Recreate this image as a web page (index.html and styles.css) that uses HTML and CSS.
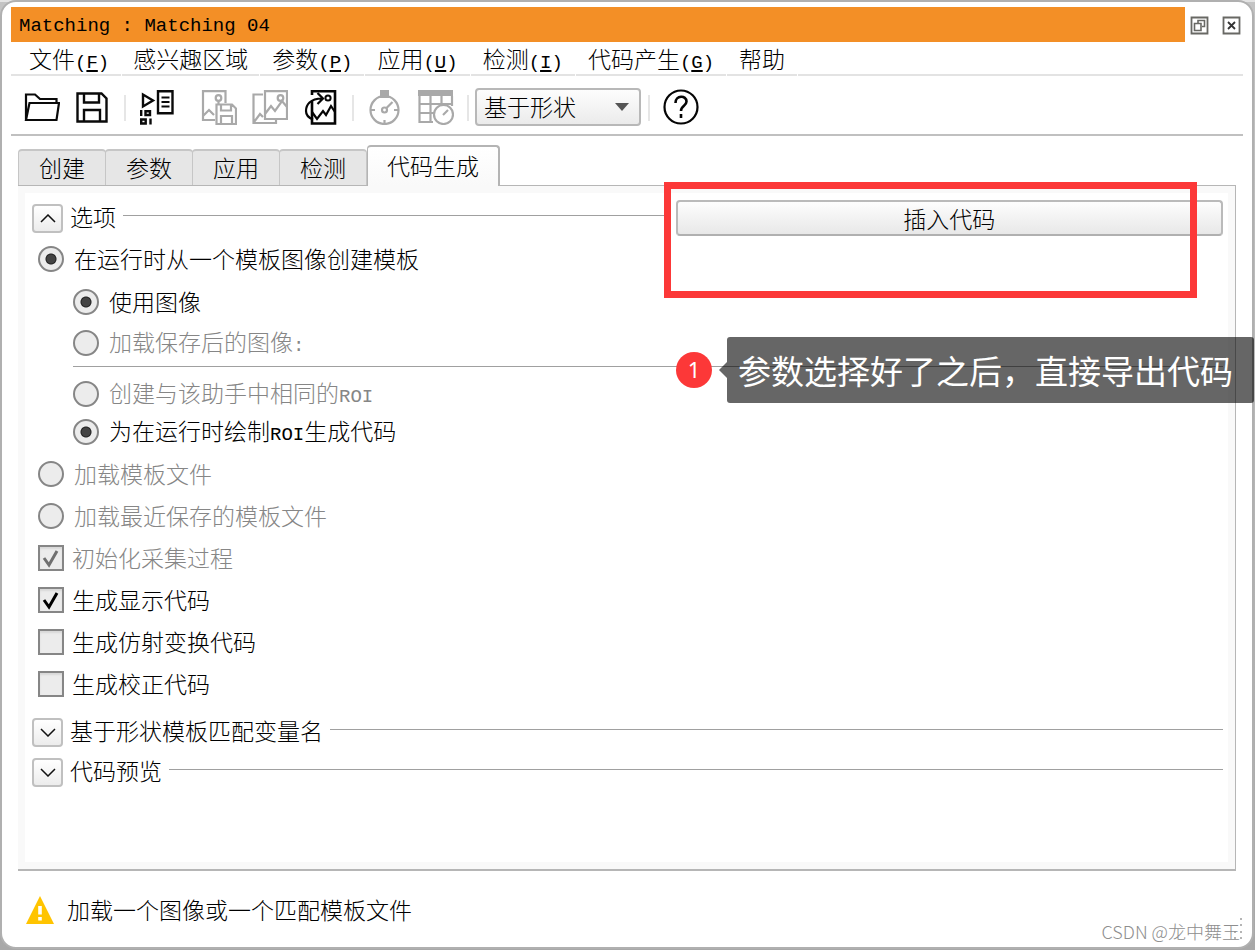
FILE: index.html
```html
<!DOCTYPE html>
<html lang="zh-CN">
<head>
<meta charset="utf-8">
<title>Matching : Matching 04</title>
<link rel="stylesheet" href="styles.css">
</head>
<body>
<div class="window">
  <header class="titlebar">
    <h1 class="title">Matching : Matching 04</h1>
    <button class="winbtn" aria-label="还原"><svg width="19" height="19" viewBox="0 0 19 19" fill="none" stroke="#686864"><path d="M1.500 1.500h16v16h-16z" stroke-width="1.800"/><path d="M8 7V4.500h6.500v6H12M4.500 7.500h6.500v7H4.500z" stroke-width="1.600"/></svg></button>
    <button class="winbtn" aria-label="关闭"><svg width="19" height="19" viewBox="0 0 19 19" fill="none" stroke="#686864"><path d="M1.500 1.500h16v16h-16z" stroke-width="1.800"/><path d="M6 6l7 7M13 6l-7 7" stroke="#333" stroke-width="1.800"/></svg></button>
  </header>

  <nav class="menubar">
    <button class="menu">文件<span class="lat">(<u>F</u>)</span></button>
    <button class="menu">感兴趣区域</button>
    <button class="menu">参数<span class="lat">(<u>P</u>)</span></button>
    <button class="menu">应用<span class="lat">(<u>U</u>)</span></button>
    <button class="menu">检测<span class="lat">(<u>I</u>)</span></button>
    <button class="menu">代码产生<span class="lat">(<u>G</u>)</span></button>
    <button class="menu">帮助</button>
    <span class="menu-rest"></span>
  </nav>

  <div class="toolbar">
    <div class="group">
      <button class="tool" aria-label="打开"><svg viewBox="0 0 36 36" fill="none" stroke="#0a0a0a" stroke-width="2.200"><path d="M2 31V5.500h9l5 4.500h16.500v4M2 31L5.500 14H35l-2.500 17z"/></svg></button>
      <button class="tool" aria-label="保存"><svg viewBox="0 0 36 36" fill="none" stroke="#0a0a0a" stroke-width="2.400"><path d="M2.500 4.500h24l5 5v23h-29zM9 4.500v9h15v-9M9 32.500V21h16v11.500"/></svg></button>
    </div>
    <span class="sep"></span>
    <div class="group">
      <button class="tool" aria-label="插入代码"><svg viewBox="0 0 36 36" fill="none" stroke="#0a0a0a" stroke-width="2.400"><path d="M4 5.500v12l10-6zM19 2.200h14.500v22H19z"/><path d="M22.500 8.500h8M22.500 13h8M22.500 17.500h8" stroke-width="2"/><path d="M2.200 21v6M11.500 29.500v6" stroke-width="2.400"/><path d="M6.500 22.200h4.500v3.800H6.500zM2.200 30.500h4.500v4H2.200z"/></svg></button>
    </div>
    <div class="group group-image">
      <button class="tool" disabled aria-label="保存图像"><svg viewBox="0 0 36 36" fill="none" stroke="#a9a9a9" stroke-width="2.200"><path d="M14 31H2V2.200h22.500V14M2 27l6-6 5 5"/><circle cx="17.500" cy="9" r="2.800"/><path d="M17.500 12v4M15.500 15.500H31l4 4V35H15.500zM20 16v5.500h10V16M20 35v-8h11v8"/></svg></button>
      <button class="tool" disabled aria-label="载入图像"><svg viewBox="0 0 36 36" fill="none" stroke="#a9a9a9" stroke-width="2.200"><path d="M11 5.500H1.500v28.500H24v-4M13 2.200h22V30H13zM13 25l6-8 4 5 7-10 5 6M2 33l6-8 3 3"/><circle cx="28.500" cy="9" r="2.800"/></svg></button>
      <button class="tool" aria-label="重新载入图像"><svg viewBox="0 0 36 36" fill="none" stroke="#050505" stroke-width="2.600"><path d="M9 6V2.200h23V34.500H9V12"/><path d="M19 9.500C7 9.500 3 16 3 22c0 5 3 7 7 8.500M14.500 4l5.500 5.500-5.500 5.500" stroke-width="2.200"/><path d="M9 23l5 7 6-8 3 4 5-9 4 6" stroke-width="2.200"/><circle cx="25" cy="9" r="2.600" stroke-width="2"/></svg></button>
    </div>
    <span class="sep"></span>
    <div class="group">
      <button class="tool" disabled aria-label="计时"><svg viewBox="0 0 36 36" fill="none" stroke="#a9a9a9" stroke-width="2.200"><circle cx="17.500" cy="21" r="14"/><circle cx="17.500" cy="21" r="2.500"/><path d="M19.500 19l6-6M17.500 31v4M4 21h4M27 21h5"/><path d="M13 1h9v8h-9z" fill="#a9a9a9" stroke="none"/></svg></button>
      <button class="tool" disabled aria-label="结果表"><svg viewBox="0 0 36 36" fill="none" stroke="#a9a9a9" stroke-width="2.200"><path d="M15 33H1.500V2M1 15h33M1 24h15M12.500 7v26M23.500 7v9M34 7v10"/><path d="M0 1h35v6H0z" fill="#a9a9a9" stroke="none"/><circle cx="25.500" cy="25.500" r="9.500" fill="#fff"/><path d="M25 26l5-5"/></svg></button>
    </div>
    <span class="sep"></span>
    <div class="combo">
      <select aria-label="匹配方法"><option>基于形状</option></select>
      <svg class="combo-arrow" width="14" height="8" viewBox="0 0 14 8"><path d="M0 0h14L7 8z" fill="#555"/></svg>
    </div>
    <span class="sep"></span>
    <div class="group">
      <button class="tool" aria-label="帮助"><svg viewBox="0 0 36 36" fill="none" stroke="#050505" stroke-width="2.200"><circle cx="18" cy="18" r="16.500"/><path d="M12.500 14c0-8 11-8 11-1.500 0 4.500-5.500 4-5.500 9.500M18 25v4" stroke-width="2.600"/></svg></button>
    </div>
  </div>

  <main class="main">
    <div class="tabs" role="tablist">
      <button class="tab" role="tab">创建</button>
      <button class="tab" role="tab">参数</button>
      <button class="tab" role="tab">应用</button>
      <button class="tab" role="tab">检测</button>
      <button class="tab active" role="tab" aria-selected="true">代码生成</button>
    </div>
    <section class="panel">
      <div class="head-row">
        <div class="section">
          <button class="toggle" aria-label="折叠"><svg width="16" height="9" viewBox="0 0 16 9"><path d="M1 8l7-7 7 7" fill="none" stroke="#111" stroke-width="1.500"/></svg></button>
          <h2 class="section-title">选项</h2>
          <span class="rule"></span>
        </div>
        <button class="insert">插入代码</button>
      </div>

      <div class="options">
        <label class="opt"><input type="radio" name="mode" checked><span class="text">在运行时从一个模板图像创建模板</span></label>
        <div class="sub">
          <div class="sub-image">
            <label class="opt"><input type="radio" name="img" checked><span class="text">使用图像</span></label>
            <label class="opt off"><input type="radio" name="img" disabled><span>加载保存后的图像<span class="lat">:</span></span></label>
          </div>
          <hr class="divider">
          <label class="opt off"><input type="radio" name="roi" disabled><span>创建与该助手中相同的<span class="lat">ROI</span></span></label>
          <label class="opt"><input type="radio" name="roi" checked><span>为在运行时绘制<span class="lat">ROI</span>生成代码</span></label>
        </div>
        <label class="opt off"><input type="radio" name="mode" disabled><span class="text">加载模板文件</span></label>
        <label class="opt off"><input type="radio" name="mode" disabled><span class="text">加载最近保存的模板文件</span></label>
        <label class="opt off"><span class="check"><input type="checkbox" checked disabled><svg class="tick" viewBox="0 0 26 26"><path d="M6 13l5 7 8-14" fill="none" stroke="#707070" stroke-width="3"/></svg></span><span class="text">初始化采集过程</span></label>
        <label class="opt"><span class="check"><input type="checkbox" checked><svg class="tick" viewBox="0 0 26 26"><path d="M6 13l5 7 8-14" fill="none" stroke="#000" stroke-width="3"/></svg></span><span class="text">生成显示代码</span></label>
        <label class="opt"><span class="check"><input type="checkbox"></span><span class="text">生成仿射变换代码</span></label>
        <label class="opt"><span class="check"><input type="checkbox"></span><span class="text">生成校正代码</span></label>
      </div>

      <div class="folded">
        <div class="section">
          <button class="toggle" aria-label="展开"><svg width="16" height="9" viewBox="0 0 16 9"><path d="M1 1l7 7 7-7" fill="none" stroke="#111" stroke-width="1.500"/></svg></button>
          <h2 class="section-title">基于形状模板匹配变量名</h2>
          <span class="rule"></span>
        </div>
        <div class="section">
          <button class="toggle" aria-label="展开"><svg width="16" height="9" viewBox="0 0 16 9"><path d="M1 1l7 7 7-7" fill="none" stroke="#111" stroke-width="1.500"/></svg></button>
          <h2 class="section-title">代码预览</h2>
          <span class="rule"></span>
        </div>
      </div>
    </section>
  </main>

  <footer class="status">
    <svg width="28" height="28" viewBox="0 0 28 28"><path d="M14 0l14 28H0z" fill="#ffc400"/><path d="M12.200 10h3.600v8.500h-3.600zM12.200 21h3.600v3.500h-3.600z" fill="#fff"/></svg>
    <span class="text">加载一个图像或一个匹配模板文件</span>
  </footer>
</div>

<div class="highlight"></div>
<div class="badge">1</div>
<div class="callout">参数选择好了之后，直接导出代码</div>
<svg class="grip" width="10" height="22" viewBox="0 0 10 22" fill="#b5b5b5"><path d="M7 0h2v2H7zM7 6h2v2H7zM7 13h2v2H7zM7 19h2v2H7zM1 13h2v2H1zM1 19h2v2H1z"/></svg>
<div class="watermark">CSDN @龙中舞王</div>
</body>
</html>
```
FILE: styles.css
```css
* { box-sizing: border-box; }

body {
  position: relative;
  margin: 0;
  min-height: 100vh;
  display: flex;
  background:
    linear-gradient(90deg, #e4e4e4 85px, #2d292b 85px, #2d292b 484px, #b4b4b4 484px, #b4b4b4 96%, #e4e4e4 96%) top / 100% 2px no-repeat,
    linear-gradient(#c4c4c4, #a8a8a8);
  font-family: "Noto Sans CJK SC", sans-serif;
  font-size: 23px;
  font-weight: 300;
  line-height: 32px;
  color: #000;
}

button, select, input { font: inherit; color: inherit; margin: 0; }
button { padding: 0; border: 0; background: none; }

.lat {
  font-family: "Liberation Mono", monospace;
  font-size: 19px;
}

.window {
  flex: 1;
  display: flex;
  flex-direction: column;
  margin: 0 1px 1px 0;
  padding: 5px 9px 0;
  border: 2px solid #b0b0b0;
  border-radius: 16px;
  background: #fff;
}

.titlebar { display: flex; align-items: center; gap: 13px; }
.title {
  flex: 1;
  margin: 0 -8px 0 0;
  padding: 3px 8px 0;
  background: #f38f26;
  font-family: "Liberation Mono", monospace;
  font-size: 19px;
  font-weight: 400;
}
.winbtn { width: 19px; height: 19px; margin-top: 2px; }
.winbtn svg { display: block; }
.winbtn:last-child { margin-right: 2px; }

.menubar { display: flex; gap: 1px; }
.menu, .menu-rest { height: 34px; border-bottom: 2px solid #e3e3e3; }
.menu { padding: 0 12px; white-space: nowrap; }
.menu:first-child { padding-left: 18px; }
.menu:nth-child(2) { padding: 0 11px; }
.menu u { text-underline-offset: 2px; text-decoration-thickness: 2px; }
.menu-rest { flex: 1; }

.toolbar {
  display: flex;
  align-items: center;
  height: 60px;
  padding: 3px 0 0 13px;
  border-bottom: 2px solid #c0c0c0;
}
.group { display: flex; gap: 15px; }
.group-image { margin-left: 26px; }
.tool, .tool svg { display: block; width: 36px; height: 36px; }
.sep { width: 2px; height: 26px; margin: 2px 13px 0; background: #e6e6e6; }
.combo { position: relative; margin: 0 -6px 0 -7px; }
.combo select {
  appearance: none;
  display: block;
  width: 166px;
  height: 38px;
  padding: 0 7px 2px;
  border: 2px solid #b8b8b8;
  border-radius: 4px;
  background: linear-gradient(#fdfdfd, #ebebeb);
}
.combo-arrow { position: absolute; right: 12px; top: 15px; pointer-events: none; }

.main { flex: 1; display: flex; flex-direction: column; padding: 9px 7px 0; }
.tabs { display: flex; align-items: flex-end; margin-bottom: -1px; }
.tab {
  height: 37px;
  width: 88px;
  margin-right: -1px;
  padding-bottom: 2px;
  border: 2px solid #c6c6c6;
  border-width: 2px 1px 1px;
  border-bottom-color: #b4b4b4;
  border-radius: 4px 4px 0 0;
  background: #e6e6e6;
}
.tab.active {
  z-index: 1;
  width: 133px;
  height: 41px;
  margin-left: 1px;
  padding-bottom: 3px;
  border-color: #b4b4b4;
  border-right-width: 2px;
  border-bottom: 0;
  background: linear-gradient(#fff, #f9f9f9);
}
.panel {
  flex: 1;
  padding: 14px 12px 0 14px;
  border: 1px solid #b6b6b6;
  border-width: 1px 1px 2px 0;
  background: #fff;
  box-shadow: inset 0 0 0 7px #f9f9f9;
}

.head-row { display: flex; gap: 6px; margin-bottom: 2px; }
.head-row .section { flex: 54; height: 36px; }
.insert {
  flex: 46;
  height: 36px;
  padding-bottom: 3px;
  border: 2px solid #bababa;
  border-bottom-color: #b0b0b0;
  border-radius: 4px;
  background: linear-gradient(#fdfdfd, #e8e8e8);
}
.section { display: flex; align-items: center; height: 40px; }
.toggle {
  display: grid;
  place-items: center;
  width: 31px;
  height: 29px;
  border: 2px solid #c0c0c0;
  border-radius: 4px;
  background: linear-gradient(#fff, #ececec);
}
.section-title { margin: 0 7px; padding-bottom: 4px; font-size: 23px; font-weight: 300; }
.rule { flex: 1; height: 6px; border-top: 1px solid #a0a0a0; }

.options { padding-left: 6px; }
.opt { display: flex; align-items: center; gap: 10px; height: 42px; }
.off { color: #868686; }
.text { padding-bottom: 3px; }
.opt input {
  appearance: none;
  display: block;
  width: 26px;
  height: 26px;
  border: 2px solid #868686;
  background: #ececec;
}
.opt input[type="radio"] { border-radius: 50%; }
.opt input[type="radio"]:checked {
  background: radial-gradient(circle, #444 0 4px, #222 5px, #ececec 6px);
}
.check { position: relative; margin-right: -2px; }
.check input { box-shadow: inset 0 2px 2px #d8d8d8; }
.tick { position: absolute; inset: 0; pointer-events: none; }

.sub { padding: 3px 0 2px 35px; }
.sub .opt { height: 38px; }
.sub-image { display: flex; flex-direction: column; gap: 3px; }
.divider { margin: 4px 0 8px; border: 0; border-top: 1px solid #a0a0a0; }
.folded { margin-top: 7px; }

.status {
  display: flex;
  align-items: center;
  gap: 13px;
  height: 76px;
  padding: 2px 15px 0;
}

.highlight {
  position: absolute;
  top: 182px;
  right: 58px;
  width: 533px;
  height: 116px;
  border: 7px solid #fc3838;
}
.badge {
  position: absolute;
  top: 352px;
  right: 543px;
  width: 36px;
  height: 36px;
  border-radius: 50%;
  background: #fc3838;
  color: #fff;
  font-family: "Noto Sans", sans-serif;
  font-size: 22px;
  font-weight: 400;
  line-height: 34px;
  text-align: center;
}
.callout {
  position: absolute;
  top: 337px;
  right: 1px;
  padding: 0 21px 0 11px;
  border-radius: 3px;
  background: rgba(0, 0, 0, 0.6);
  color: #fff;
  font-size: 33px;
  font-weight: 400;
  line-height: 66px;
  white-space: nowrap;
}
.callout::before {
  content: "";
  position: absolute;
  top: 25px;
  right: 100%;
  border: 8px solid transparent;
  border-right-color: rgba(0, 0, 0, 0.6);
  border-left: 0;
}
.grip { position: absolute; right: 12px; bottom: 10px; }
.watermark {
  position: absolute;
  right: 15px;
  bottom: 6px;
  color: #8e8e8e;
  font-size: 18px;
  line-height: 26px;
}
```
